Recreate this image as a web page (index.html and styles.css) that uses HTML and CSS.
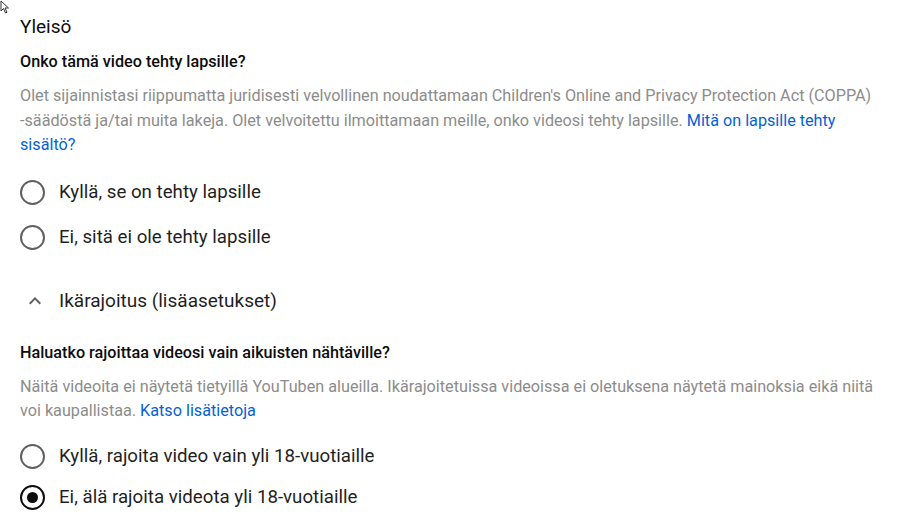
FILE: index.html
```html
<!DOCTYPE html>
<html lang="fi">
<head>
  <meta charset="UTF-8">
  <title>Yleisö</title>
  <link rel="stylesheet" href="styles.css">
</head>
<body>
  <svg class="kursori" width="10" height="14" viewBox="0 0 10 14">
    <path d="M1 1 L1 11 L3.5 8.5 L5.5 13 L7 12.3 L5 8 L8.5 8 Z" fill="#fff" stroke="#333" stroke-width="1"/>
  </svg>

  <div class="sisalto">
    <h2 class="otsikko">Yleisö</h2>

    <div class="kysymys">Onko tämä video tehty lapsille?</div>
    <p class="kuvaus">
      Olet sijainnistasi riippumatta juridisesti velvollinen noudattamaan Children's Online and Privacy Protection Act (COPPA)
      <span class="ehja">-säädöstä</span> ja/tai muita lakeja. Olet velvoitettu ilmoittamaan meille, onko videosi tehty lapsille.
      <a href="#">Mitä on lapsille tehty sisältö?</a>
    </p>

    <div class="valinnat">
      <label class="valinta"><span class="radio"></span>Kyllä, se on tehty lapsille</label>
      <label class="valinta"><span class="radio"></span>Ei, sitä ei ole tehty lapsille</label>
    </div>

    <div class="lisaa">
      <svg class="nuoli" width="24" height="24" viewBox="0 0 24 24">
        <path d="M7.4 15.4 L12 10.8 L16.6 15.4 L18 14 L12 8 L6 14 Z" fill="#606060"/>
      </svg>
      <span>Ikärajoitus (lisäasetukset)</span>
    </div>

    <div class="kysymys">Haluatko rajoittaa videosi vain aikuisten nähtäville?</div>
    <p class="kuvaus">
      Näitä videoita ei näytetä tietyillä YouTuben alueilla. Ikärajoitetuissa videoissa ei oletuksena näytetä mainoksia eikä niitä
      voi kaupallistaa. <a href="#">Katso lisätietoja</a>
    </p>

    <div class="valinnat tiivis">
      <label class="valinta"><span class="radio"></span>Kyllä, rajoita video vain yli 18-vuotiaille</label>
      <label class="valinta"><span class="radio valittu"></span>Ei, älä rajoita videota yli 18-vuotiaille</label>
    </div>
  </div>
</body>
</html>
```

FILE: styles.css
```css
* {
  box-sizing: border-box;
}

body {
  margin: 0;
  font-family: Roboto, 'Noto Sans', sans-serif;
  background: #ffffff;
  color: #0d0d0d;
}

.kursori {
  position: absolute;
  left: 0;
  top: 0;
}

.sisalto {
  padding: 15px 0 0 20px;
  width: 885px;
}

.otsikko {
  margin: 0;
  font-size: 19px;
  font-weight: 400;
  line-height: 24px;
}

.kysymys {
  font-size: 16.2px;
  font-weight: 500;
  line-height: 24px;
  margin-top: 11px;
}

.kuvaus {
  margin: 10px 0 0;
  font-size: 16.2px;
  line-height: 24.5px;
  color: #8c8c8c;
}

.ehja {
  white-space: nowrap;
}

.kuvaus a {
  color: #065fd4;
  text-decoration: none;
}

.valinnat {
  margin-top: 22px;
  display: flex;
  flex-direction: column;
  gap: 20px;
}

.valinnat.tiivis {
  margin-top: 20px;
  gap: 16px;
}

.valinta {
  display: flex;
  align-items: center;
  gap: 14px;
  font-size: 18.7px;
  line-height: 24px;
  color: #1f1f1f;
}

.radio {
  width: 25px;
  height: 25px;
  border: 2.5px solid #606060;
  border-radius: 50%;
  flex-shrink: 0;
  display: flex;
  align-items: center;
  justify-content: center;
}

.radio.valittu {
  border-color: #0d0d0d;
}

.radio.valittu::after {
  content: "";
  width: 11px;
  height: 11px;
  border-radius: 50%;
  background: #0d0d0d;
}

.lisaa {
  margin-top: 38px;
  display: flex;
  align-items: center;
  gap: 12px;
  padding-left: 3px;
  font-size: 19px;
  line-height: 26px;
  color: #1f1f1f;
}

.lisaa + .kysymys {
  margin-top: 27px;
}
```
